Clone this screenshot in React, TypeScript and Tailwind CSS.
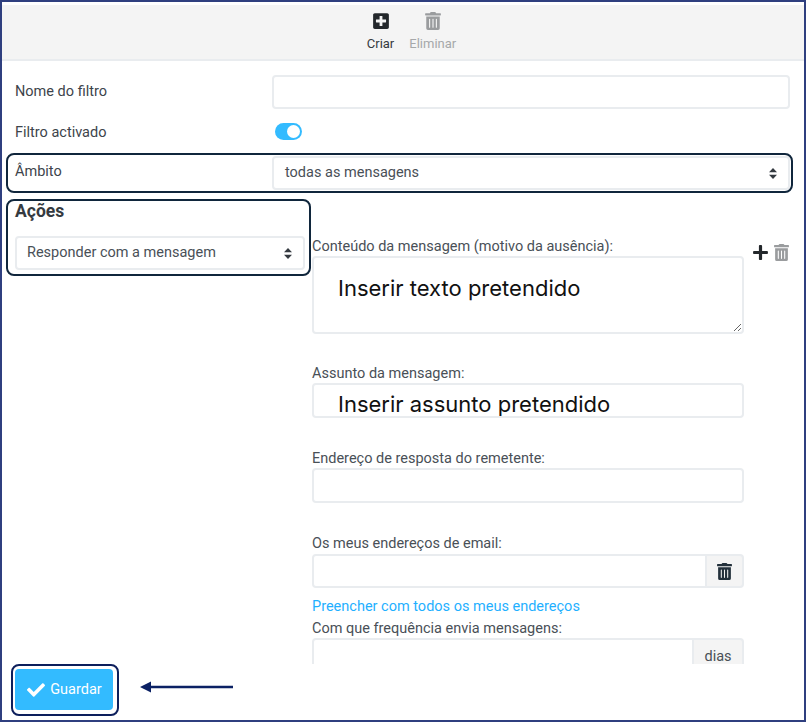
import { FaCheck, FaPlus, FaPlusSquare, FaTrashAlt } from "react-icons/fa";

const inputBox = "block w-full rounded-[4px] border-2 border-[#e9ecef] bg-white outline-none";

function SelectBox({ value, className }: { value: string; className: string }) {
  return (
    <div className={`flex items-center justify-between rounded-[4px] border-2 border-[#e9ecef] bg-white pl-[10px] pr-[11px] text-[#495057] ${className}`}>
      <span>{value}</span>
      <svg width="8" height="11" viewBox="0 0 8 11" className="text-[#343a40]">
        <path d="M4 0 8 4.2H0zM4 11 0 6.8h8z" fill="currentColor" />
      </svg>
    </div>
  );
}

// linha de formulário com etiqueta por cima
function Field({ label, className, children }: { label: string; className: string; children: React.ReactNode }) {
  return (
    <div className={className}>
      <label className="block h-[20px] leading-[21px] text-[#495057]">{label}</label>
      {children}
    </div>
  );
}

export default function App() {
  return (
    <div className="flex h-[722px] w-[806px] flex-col overflow-hidden border-2 border-[#2f3f7f] bg-white font-['Roboto',sans-serif] text-[14.5px] text-[#3d444b]">
      {/* barra de ferramentas */}
      <div className="mt-[3px] flex h-[56px] shrink-0 justify-center gap-[15px] border-b-2 border-[#e9ecef] bg-[#f4f4f4] pl-[17px] pt-[7px]">
        <div className="flex flex-col items-center gap-[6px] text-[13px] text-[#343a40]">
          <FaPlusSquare size={18} className="text-[#23272b]" />
          <span className="leading-[16px]">Criar</span>
        </div>
        <div className="flex flex-col items-center gap-[6px] text-[13px] text-[#a6a8aa]">
          <FaTrashAlt size={18} className="text-[#9a9c9e]" />
          <span className="leading-[16px]">Eliminar</span>
        </div>
      </div>

      <div className="flex h-[603px] shrink-0 flex-col overflow-hidden pl-[13px] pr-[14px]">
        <div className="mt-[14px] flex h-[34px] shrink-0 items-center">
          <label className="w-[257px]">Nome do filtro</label>
          <input className={`${inputBox} h-[34px] flex-1 !w-auto`} />
        </div>

        <div className="mt-[13px] flex h-[18px] shrink-0 items-center">
          <label className="w-[260px] pt-[3px]">Filtro activado</label>
          <div className="flex h-[17px] w-[27px] items-center justify-end rounded-full bg-[#33bbff] pr-[2px]">
            <div className="h-[13px] w-[13px] rounded-full bg-white" />
          </div>
        </div>

        <div className="relative mt-[16px] flex h-[34px] shrink-0">
          <label className="w-[257px] pt-[5px]">Âmbito</label>
          <SelectBox value="todas as mensagens" className="h-[34px] flex-1 pl-[11px]" />
          <div className="pointer-events-none absolute -bottom-[3px] -left-[9px] -right-[3px] -top-[3px] rounded-[8px] border-2 border-[#10263c]" />
        </div>

        <div className="mt-[9px] flex min-h-0 flex-1">
          <div className="relative h-[72px] w-[290px] shrink-0">
            <h3 className="mt-[3px] text-[17.5px] font-bold leading-[19px] text-[#343a40]">Ações</h3>
            <SelectBox value="Responder com a mensagem" className="mt-[15px] h-[34px]" />
            <div className="pointer-events-none absolute -left-[9px] -right-[6px] top-0 bottom-[-5px] rounded-[8px] border-2 border-[#10263c]" />
          </div>

          <div className="ml-[7px] flex w-[432px] shrink-0 flex-col">
            <Field label="Conteúdo da mensagem (motivo da ausência):" className="mt-[37px] shrink-0">
              <textarea
                defaultValue="Inserir texto pretendido"
                className={`${inputBox} h-[78px] resize-y pl-[24px] pt-[15px] font-['Inter',sans-serif] text-[22px] leading-[30px] text-[#111]`}
              />
            </Field>
            <Field label="Assunto da mensagem:" className="mt-[29px] shrink-0">
              <input
                defaultValue="Inserir assunto pretendido"
                className={`${inputBox} h-[35px] pl-[24px] pt-[6px] font-['Inter',sans-serif] text-[22px] text-[#111]`}
              />
            </Field>
            <Field label="Endereço de resposta do remetente:" className="mt-[30px] shrink-0">
              <input className={`${inputBox} h-[35px]`} />
            </Field>
            <Field label="Os meus endereços de email:" className="mt-[30px] shrink-0">
              <div className="mt-[1px] flex h-[34px]">
                <input className="min-w-0 flex-1 rounded-l-[4px] border-2 border-[#e9ecef] bg-white outline-none" />
                <div className="flex w-[37px] items-center justify-center rounded-r-[4px] border-2 border-l-0 border-[#e9ecef] bg-[#f4f4f4]">
                  <FaTrashAlt size={17} className="text-[#23303b]" />
                </div>
              </div>
            </Field>
            <a className="mt-[9px] block h-[19px] shrink-0 leading-[19px] text-[#1fb0ff]">Preencher com todos os meus endereços</a>
            <Field label="Com que frequência envia mensagens:" className="mt-[2px] shrink-0">
              <div className="flex h-[34px]">
                <input className="min-w-0 flex-1 rounded-l-[4px] border-2 border-[#e9ecef] bg-white outline-none" />
                <div className="flex w-[50px] items-center justify-center rounded-r-[4px] border-2 border-l-0 border-[#e9ecef] bg-[#f4f4f4] pt-[4px] text-[#495057]">
                  dias
                </div>
              </div>
            </Field>
          </div>

          <div className="ml-[8px] mt-[44px] flex h-[18px] items-center gap-[4px]">
            <FaPlus size={17} className="text-[#23272b]" />
            <FaTrashAlt size={17} className="text-[#9a9c9e]" />
          </div>
        </div>
      </div>

      {/* botão guardar */}
      <div className="flex flex-1 items-start px-[13px] pt-[5px]">
        <div className="relative">
          <button className="flex h-[41px] w-[98px] items-center justify-center gap-[5px] rounded-[4px] bg-[#33bbff] pl-[1px] text-[14.5px] text-white">
            <FaCheck size={18} />
            Guardar
          </button>
          <div className="pointer-events-none absolute -bottom-[6px] -left-[4px] -right-[6px] -top-[5px] rounded-[8px] border-2 border-[#0d1f5c]" />
        </div>
        <svg width="94" height="12" viewBox="0 0 94 12" className="ml-[27px] mt-[12px] text-[#0b2164]">
          <path d="M0 6 11 0.5v4.2h82v2.6H11v4.2z" fill="currentColor" />
        </svg>
      </div>
    </div>
  );
}
